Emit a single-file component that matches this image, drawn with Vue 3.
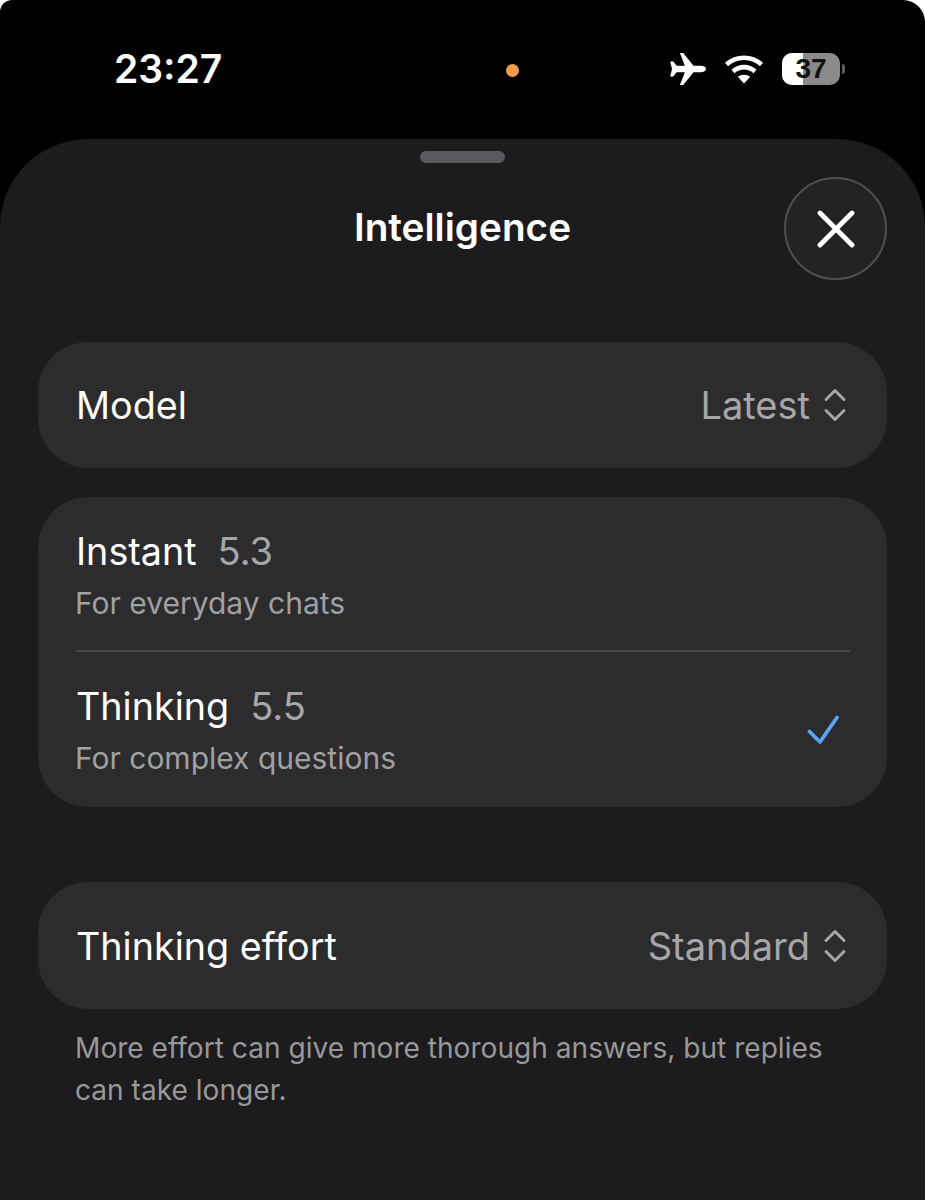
<script setup>
</script>

<template>
  <div class="screen">
    <div class="status">
      <span class="time">23:27</span>
      <span class="dot"></span>
      <div class="status-icons">
        <svg class="plane" width="38" height="34" viewBox="0 0 38 34">
          <path fill="#fff" d="M37 17c0-2-2.500-3.200-5-3.200h-7.500L14.200 1h-3.300l5 12.800H7.600L4.300 9.600H1.200l1.800 7.400-1.800 7.400h3.100l3.300-4.200h8.300l-5 12.800h3.300L24.500 20.200H32c2.500 0 5-1.200 5-3.200z"/>
        </svg>
        <svg class="wifi" width="40" height="30" viewBox="0 0 40 30">
          <path fill="none" stroke="#fff" stroke-width="4.600" d="M2.500 10.500C12.500 1.500 27.500 1.500 37.500 10.500M9 17.500c6.500-5.800 15.500-5.800 22 0"/>
          <path fill="#fff" d="M20 29.500 13.800 22.800c3.600-2.900 8.800-2.900 12.400 0z"/>
        </svg>
        <div class="battery">
          <div class="cell">
            <div class="cell-fill"></div>
            <span class="level">37</span>
          </div>
          <span class="nub"></span>
        </div>
      </div>
    </div>

    <div class="sheet">
      <div class="grabber"></div>
      <div class="header">
        <h1 class="title">Intelligence</h1>
        <button class="close" aria-label="Close">
          <svg width="38" height="38" viewBox="0 0 38 38">
            <path fill="none" stroke="#fff" stroke-width="4.800" stroke-linecap="round" d="M3 3l32 32M35 3L3 35"/>
          </svg>
        </button>
      </div>

      <div class="card row select">
        <span class="label">Model</span>
        <span class="value">
          Latest
          <svg class="updown" width="24" height="34" viewBox="0 0 24 34">
            <path fill="none" stroke="#a6a6a8" stroke-width="3" stroke-linecap="round" stroke-linejoin="round" d="M3 11.500 12 2.500l9 9M3 22.500l9 9 9-9"/>
          </svg>
        </span>
      </div>

      <div class="card group">
        <div class="option first">
          <div class="option-text">
            <div class="option-title"><span class="label">Instant</span><span class="version">5.3</span></div>
            <div class="desc">For everyday chats</div>
          </div>
        </div>
        <div class="divider"></div>
        <div class="option">
          <div class="option-text">
            <div class="option-title"><span class="label">Thinking</span><span class="version">5.5</span></div>
            <div class="desc">For complex questions</div>
          </div>
          <svg class="check" width="32" height="30" viewBox="0 0 32 30">
            <path fill="none" stroke="#5aa4f5" stroke-width="3.800" stroke-linecap="round" stroke-linejoin="round" d="M2.500 16.500 13 27 30 2.500"/>
          </svg>
        </div>
      </div>

      <div class="card row select effort">
        <span class="label">Thinking effort</span>
        <span class="value">
          Standard
          <svg class="updown" width="24" height="34" viewBox="0 0 24 34">
            <path fill="none" stroke="#a6a6a8" stroke-width="3" stroke-linecap="round" stroke-linejoin="round" d="M3 11.500 12 2.500l9 9M3 22.500l9 9 9-9"/>
          </svg>
        </span>
      </div>

      <p class="note">More effort can give more thorough answers, but replies can take longer.</p>
    </div>
  </div>
</template>

<style>
html, body { background: #fff; }
</style>

<style scoped>
.screen {
  width: 925px;
  height: 1200px;
  background: #000;
  overflow: hidden;
  border-radius: 12px 22px 0 0;
  display: flex;
  flex-direction: column;
  font-family: Inter, "Liberation Sans", sans-serif;
  color: #fff;
}
.status {
  height: 139px;
  flex: none;
  display: flex;
  align-items: flex-start;
  padding: 46px 0 0 114px;
  box-sizing: border-box;
}
.time {
  font-size: 39px;
  line-height: 46px;
  font-weight: 600;
  width: 392px;
}
.dot {
  width: 13px;
  height: 13px;
  border-radius: 50%;
  background: #f39b4d;
  margin-top: 18px;
}
.status-icons {
  display: flex;
  align-items: center;
  margin-left: 150px;
  margin-top: 5px;
  height: 36px;
}
.plane { margin-right: 17px; }
.wifi { margin-right: 18px; }
.battery { display: flex; align-items: center; }
.cell {
  position: relative;
  width: 58px;
  height: 32px;
  border-radius: 10px;
  background: #8a8a8a;
  overflow: hidden;
}
.cell-fill {
  position: absolute;
  left: 0;
  top: 0;
  bottom: 0;
  width: 21px;
  background: #fff;
}
.level {
  position: relative;
  display: block;
  text-align: center;
  color: #111;
  font-size: 28px;
  line-height: 32px;
  font-weight: 700;
  font-family: "Liberation Sans", sans-serif;
}
.nub {
  width: 3px;
  height: 10px;
  margin-left: 2px;
  background: #5c5c5c;
  border-radius: 0 4px 4px 0;
}
.sheet {
  flex: 1;
  background: #1c1c1e;
  border-radius: 88px 88px 0 0;
  padding: 12px 38px 0;
  display: flex;
  flex-direction: column;
}
.grabber {
  width: 85px;
  height: 12px;
  border-radius: 6px;
  background: #5a5a5e;
  align-self: center;
  flex: none;
}
.header {
  position: relative;
  height: 179px;
  flex: none;
}
.title {
  margin: 0;
  padding-top: 41px;
  text-align: center;
  font-size: 38.700px;
  line-height: 46px;
  font-weight: 600;
}
.close {
  position: absolute;
  right: 0;
  top: 14px;
  width: 103px;
  height: 103px;
  box-sizing: border-box;
  border-radius: 50%;
  border: 2px solid #4f4f52;
  background: #232325;
  padding: 0;
  display: flex;
  align-items: center;
  justify-content: center;
}
.card {
  background: #2c2c2e;
  border-radius: 50px;
  flex: none;
}
.row {
  height: 126px;
  display: flex;
  align-items: center;
  justify-content: space-between;
  padding: 0 40px 0 38px;
}
.label {
  font-size: 37.700px;
  line-height: 46px;
  color: #fff;
}
.value {
  display: flex;
  align-items: center;
  gap: 13px;
  font-size: 38px;
  color: #a6a6a8;
}
.group {
  margin-top: 29px;
  height: 310px;
  padding: 0 37px 0 38px;
  display: flex;
  flex-direction: column;
}
.option {
  height: 155px;
  flex: none;
  display: flex;
  align-items: center;
  justify-content: space-between;
  box-sizing: border-box;
}
.first { height: 153px; }
.option-text {
  align-self: flex-start;
  padding-top: 31px;
}
.option-title {
  display: flex;
  gap: 21px;
}
.version {
  font-size: 38px;
  line-height: 46px;
  color: #a6a6a8;
}
.desc {
  font-size: 30px;
  line-height: 36px;
  margin: 11px 0 0 -1px;
  color: #a0a0a3;
}
.divider {
  height: 2px;
  background: #48484a;
  flex: none;
}
.check { margin-right: 11px; }
.effort { margin-top: 75px; height: 127px; }
.note {
  margin: 18px 0 0 -1px;
  padding: 0 38px;
  font-size: 28.100px;
  line-height: 42px;
  color: #98989b;
}
</style>
